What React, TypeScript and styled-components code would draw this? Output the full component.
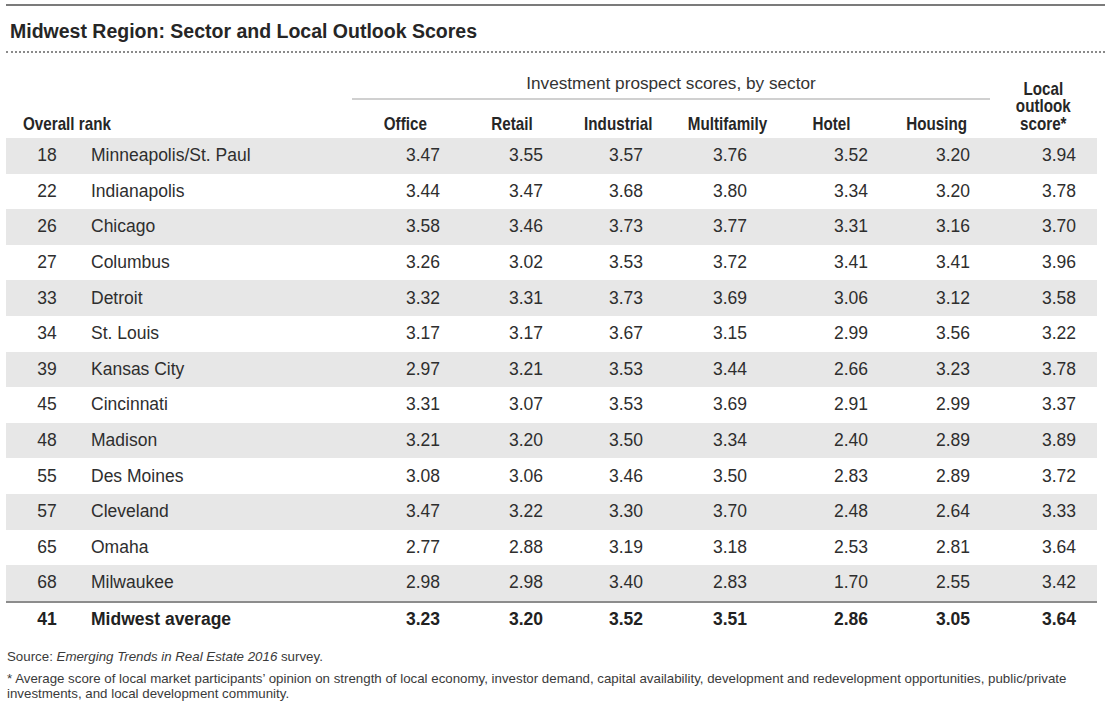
import React from 'react';
import styled, { createGlobalStyle } from 'styled-components';

const GlobalStyle = createGlobalStyle`
    body {
        margin: 0;
        background: #fff;
        font-family: "Liberation Sans", Arial, sans-serif;
        color: #2b2b2b;
    }
`;

// column widths of the table, left to right
const COLS = '82px 264px 98px 103px 107px 120px 100px 110px 107px';

const Page = styled.div`
    width: 1099px;
    padding: 4px 0 0 6px;
`;

const TopRule = styled.div`
    border-top: 2px solid #7b7b7b;
`;

const Title = styled.h1`
    margin: 0;
    padding: 14px 0 0 4px;
    height: 31px;
    font-size: 19.5px;
    line-height: 22px;
    font-weight: bold;
    color: #262626;
`;

const DottedRule = styled.div`
    border-top: 2px dotted #8a8a8a;
`;

const Table = styled.div`
    width: 1091px;
    display: grid;
    grid-template-columns: ${COLS};
`;

// no narrow face installed: squeeze the bold sans to a condensed look
const Squeeze = styled.span<{ $origin: string }>`
    display: inline-block;
    transform: scaleX(0.8);
    transform-origin: ${(p) => p.$origin};
`;

const Narrow = styled.div`
    font-weight: bold;
    font-size: 19px;
    line-height: 17.5px;
    color: #262626;
`;

const SuperHead = styled.div`
    grid-column: 3 / 9;
    grid-row: 1;
    height: 47px;
    box-sizing: border-box;
    padding-top: 21px;
    border-bottom: 2px solid #d0d0d0;
    text-align: center;
    font-size: 17.2px;
    line-height: 19px;
    color: #333;
`;

const RankHead = styled(Narrow)`
    grid-column: 1 / 3;
    grid-row: 2;
    height: 38px;
    box-sizing: border-box;
    padding: 0 0 6px 17px;
    display: flex;
    align-items: flex-end;
`;

const ColHead = styled(Narrow)<{ $col: number; $pad: number }>`
    grid-column: ${(p) => p.$col};
    grid-row: 2;
    display: flex;
    align-items: flex-end;
    justify-content: flex-end;
    padding: 0 ${(p) => p.$pad}px 6px 0;
`;

const LocalHead = styled(Narrow)`
    grid-column: 9;
    grid-row: 1 / 3;
    display: flex;
    align-items: flex-end;
    justify-content: center;
    text-align: center;
    padding-bottom: 6px;
`;

const Row = styled.div<{ $shade: boolean }>`
    grid-column: 1 / -1;
    display: grid;
    grid-template-columns: ${COLS};
    align-items: center;
    height: 35.6px;
    background: ${(p) => (p.$shade ? '#e7e7e7' : '#fff')};
    font-size: 17.5px;
    color: #2e2e2e;
`;

const TotalRow = styled(Row)`
    height: 34px;
    border-top: 2px solid #8c8c8c;
    font-weight: bold;
    color: #222;
`;

const Rank = styled.div`
    text-align: center;
`;

const City = styled.div`
    padding-left: 3px;
`;

const Value = styled.div<{ $pad: number }>`
    text-align: right;
    padding-right: ${(p) => p.$pad}px;
`;

const Notes = styled.div`
    padding: 12px 0 0 1px;
    font-size: 13.3px;
    line-height: 15px;
    color: #3a3a3a;
`;

const Note = styled.p<{ $gap?: number }>`
    margin: ${(p) => p.$gap ?? 0}px 0 0;
    width: 1080px;
`;

const sectors = [
    { name: 'Office', head: 23, val: 10 },
    { name: 'Retail', head: 20, val: 10 },
    { name: 'Industrial', head: 7, val: 17 },
    { name: 'Multifamily', head: 13, val: 33 },
    { name: 'Hotel', head: 30, val: 12 },
    { name: 'Housing', head: 23, val: 20 },
];
const localPad = 21;

const rows: [string, string, string[]][] = [
    ['18', 'Minneapolis/St. Paul', ['3.47', '3.55', '3.57', '3.76', '3.52', '3.20', '3.94']],
    ['22', 'Indianapolis', ['3.44', '3.47', '3.68', '3.80', '3.34', '3.20', '3.78']],
    ['26', 'Chicago', ['3.58', '3.46', '3.73', '3.77', '3.31', '3.16', '3.70']],
    ['27', 'Columbus', ['3.26', '3.02', '3.53', '3.72', '3.41', '3.41', '3.96']],
    ['33', 'Detroit', ['3.32', '3.31', '3.73', '3.69', '3.06', '3.12', '3.58']],
    ['34', 'St. Louis', ['3.17', '3.17', '3.67', '3.15', '2.99', '3.56', '3.22']],
    ['39', 'Kansas City', ['2.97', '3.21', '3.53', '3.44', '2.66', '3.23', '3.78']],
    ['45', 'Cincinnati', ['3.31', '3.07', '3.53', '3.69', '2.91', '2.99', '3.37']],
    ['48', 'Madison', ['3.21', '3.20', '3.50', '3.34', '2.40', '2.89', '3.89']],
    ['55', 'Des Moines', ['3.08', '3.06', '3.46', '3.50', '2.83', '2.89', '3.72']],
    ['57', 'Cleveland', ['3.47', '3.22', '3.30', '3.70', '2.48', '2.64', '3.33']],
    ['65', 'Omaha', ['2.77', '2.88', '3.19', '3.18', '2.53', '2.81', '3.64']],
    ['68', 'Milwaukee', ['2.98', '2.98', '3.40', '2.83', '1.70', '2.55', '3.42']],
];
const average: [string, string, string[]] = ['41', 'Midwest average', ['3.23', '3.20', '3.52', '3.51', '2.86', '3.05', '3.64']];

const pads = [...sectors.map((s) => s.val), localPad];

function Cells({ data }: { data: [string, string, string[]] }) {
    const [rank, city, vals] = data;
    return (
        <>
            <Rank>{rank}</Rank>
            <City>{city}</City>
            {vals.map((v, i) => (
                <Value key={i} $pad={pads[i]}>{v}</Value>
            ))}
        </>
    );
}

export default function App() {
    return (
        <Page>
            <GlobalStyle />
            <TopRule />
            <Title>Midwest Region: Sector and Local Outlook Scores</Title>
            <DottedRule />
            <Table>
                <SuperHead>Investment prospect scores, by sector</SuperHead>
                <LocalHead>
                    <Squeeze $origin="center">Local<br />outlook<br />score*</Squeeze>
                </LocalHead>
                <RankHead>
                    <Squeeze $origin="left">Overall rank</Squeeze>
                </RankHead>
                {sectors.map((s, i) => (
                    <ColHead key={s.name} $col={i + 3} $pad={s.head}>
                        <Squeeze $origin="right">{s.name}</Squeeze>
                    </ColHead>
                ))}
                {rows.map((r, i) => (
                    <Row key={r[0]} $shade={i % 2 === 0}>
                        <Cells data={r} />
                    </Row>
                ))}
                <TotalRow $shade={false}>
                    <Cells data={average} />
                </TotalRow>
            </Table>
            <Notes>
                <Note>Source: <i>Emerging Trends in Real Estate 2016</i> survey.</Note>
                <Note $gap={7}>
                    * Average score of local market participants’ opinion on strength of local economy, investor demand, capital availability, development and redevelopment opportunities, public/private investments, and local development community.
                </Note>
            </Notes>
        </Page>
    );
}
